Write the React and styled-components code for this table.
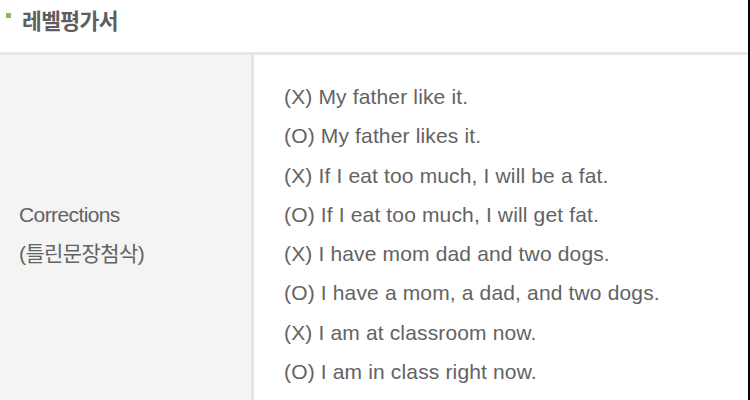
import React from 'react';
import styled, { createGlobalStyle } from 'styled-components';

const GlobalStyle = createGlobalStyle`
  html, body {
    margin: 0;
    padding: 0;
    background: #ffffff;
  }
  body {
    font-family: "Liberation Sans", Arial, "Noto Sans CJK KR", sans-serif;
    overflow: hidden;
  }
`;

const corrections = [
  { mark: 'X', text: 'My father like it.' },
  { mark: 'O', text: 'My father likes it.' },
  { mark: 'X', text: 'If I eat too much, I will be a fat.' },
  { mark: 'O', text: 'If I eat too much, I will get fat.' },
  { mark: 'X', text: 'I have mom dad and two dogs.' },
  { mark: 'O', text: 'I have a mom, a dad, and two dogs.' },
  { mark: 'X', text: 'I am at classroom now.' },
  { mark: 'O', text: 'I am in class right now.' },
];

const App = () => {
  return (
    <>
      <GlobalStyle />
      <Page>
        <Header>
          <Bullet />
          <Title>레벨평가서</Title>
        </Header>
        <Table>
          <LabelCell>
            <Line $tight>Corrections</Line>
            <Line $tight>(틀린문장첨삭)</Line>
          </LabelCell>
          <ValueCell>
            {corrections.map((item, i) => (
              <Line key={i}>
                ({item.mark}) {item.text}
              </Line>
            ))}
          </ValueCell>
        </Table>
      </Page>
    </>
  );
};

const Page = styled.div`
  width: 750px;
  height: 400px;
  box-sizing: border-box;
  border-right: 2px solid #000;
  overflow: hidden;
`;

const Header = styled.div`
  height: 55px;
  box-sizing: border-box;
  display: flex;
  align-items: flex-start;
  padding: 8px 0 0 6px;
  border-bottom: 3px solid #e6e6e6;
`;

const Bullet = styled.span`
  width: 5px;
  height: 5px;
  margin-top: 5px;
  background: #82c341;
  flex-shrink: 0;
`;

const Title = styled.h1`
  margin: 0 0 0 11px;
  font-family: "Noto Sans CJK KR", sans-serif;
  font-size: 21.5px;
  line-height: 24px;
  font-weight: 700;
  color: #5e5e5e;
  letter-spacing: -0.6px;
`;

const Table = styled.div`
  display: grid;
  grid-template-columns: 254px 1fr;
`;

const LabelCell = styled.div`
  background: #f4f4f4;
  border-right: 3px solid #e4e4e4;
  display: flex;
  flex-direction: column;
  justify-content: center;
  padding-left: 19px;
`;

const ValueCell = styled.div`
  padding: 22px 0 22px 30px;
`;

const Line = styled.p`
  margin: 0;
  font-size: 21px;
  line-height: 39.3px;
  color: #636363;
  white-space: nowrap;
  letter-spacing: ${(p) => (p.$tight ? '-0.6px' : '0.15px')};
`;

export default App;
